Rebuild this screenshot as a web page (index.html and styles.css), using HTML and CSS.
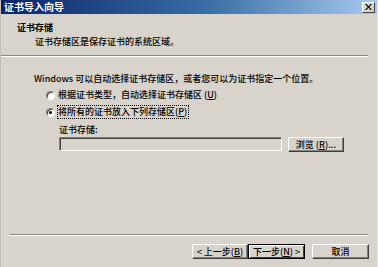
FILE: index.html
```html
<!DOCTYPE html>
<html lang="zh-CN">
<head>
<meta charset="utf-8">
<title>证书导入向导</title>
<link rel="stylesheet" href="styles.css">
</head>
<body>
<div class="window">
  <div class="titlebar">
    <span class="title-text">证书导入向导</span>
    <span class="close-btn"><svg width="7" height="6" viewBox="0 0 7 6"><path d="M0 0 L1.5 0 L3.5 2.2 L5.5 0 L7 0 L4.3 3 L7 6 L5.5 6 L3.5 3.8 L1.5 6 L0 6 L2.7 3 Z" fill="#000"/></svg></span>
  </div>
  <div class="header">
    <div class="header-title">证书存储</div>
    <div class="header-sub">证书存储区是保存证书的系统区域。</div>
  </div>
  <div class="sep sep-top"></div>
  <div class="content">
    <div class="intro">Windows 可以自动选择证书存储区，或者您可以为证书指定一个位置。</div>
    <div class="radio-row first">
      <span class="radio"></span>
      <span class="radio-label">根据证书类型，自动选择证书存储区 (<u>U</u>)</span>
    </div>
    <div class="radio-row second">
      <span class="radio checked"><span class="dot"></span></span>
      <span class="radio-label focus">将所有的证书放入下列存储区(<u>P</u>)</span>
    </div>
    <div class="store-label">证书存储:</div>
    <div class="store-row">
      <div class="input"></div>
      <div class="btn browse">浏览 (<u>R</u>)...</div>
    </div>
  </div>
  <div class="sep sep-bottom"></div>
  <div class="footer">
    <div class="btn nav">&lt; 上一步(<u>B</u>)</div>
    <div class="btn nav default">下一步(<u>N</u>) &gt;</div>
    <div class="btn cancel">取消</div>
  </div>
</div>
</body>
</html>
```
FILE: styles.css
```css
* { box-sizing: border-box; }
html, body {
  margin: 0;
  padding: 0;
  background: #d8d4cc;
}
.window {
  width: 378px;
  height: 267px;
  display: flex;
  flex-direction: column;
  background: #d8d4cc;
  font-family: "Noto Sans CJK SC", "Liberation Sans", sans-serif;
  font-size: 9px;
  font-weight: 500;
  color: #000;
  border-left: 1px solid #c4c0b8;
  border-right: 1px solid #ece9e4;
  overflow: hidden;
}
.titlebar {
  height: 14px;
  flex: none;
  display: flex;
  align-items: center;
  justify-content: space-between;
  padding: 0 2px 0 3px;
  background: linear-gradient(to right, #0a246a 0%, #3a6ea5 55%, #a6caf0 100%);
}
.title-text {
  color: #fff;
  font-weight: bold;
  font-size: 10px;
  line-height: 14px;
}
.close-btn {
  width: 13px;
  height: 11px;
  background: #d8d4cc;
  border-top: 1px solid #fff;
  border-left: 1px solid #fff;
  border-right: 1px solid #404040;
  border-bottom: 1px solid #404040;
  display: flex;
  align-items: center;
  justify-content: center;
}
.header {
  height: 41px;
  flex: none;
  padding: 8px 0 0 16px;
}
.header-title {
  font-weight: bold;
  line-height: 11px;
}
.header-sub {
  margin-top: 3px;
  padding-left: 18px;
  line-height: 11px;
}
.sep {
  flex: none;
  height: 2px;
  border-top: 1px solid #8c8984;
  border-bottom: 1px solid #fff;
}
.sep-top {
  width: 367px;
}
.sep-bottom {
  width: 358px;
  margin-left: 9px;
}
.content {
  flex: 1;
  padding: 16px 0 0 33px;
}
.intro {
  line-height: 12px;
}
.radio-row {
  display: flex;
  align-items: center;
  height: 14px;
  margin-left: 12px;
}
.radio-row.first { margin-top: 3px; }
.radio-row.second { margin-top: 3px; }
.radio {
  width: 9px;
  height: 9px;
  border-radius: 50%;
  background: #fff;
  border-top: 1px solid #808080;
  border-left: 1px solid #808080;
  border-right: 1px solid #fff;
  border-bottom: 1px solid #fff;
  box-shadow: inset 1px 1px 0 #404040;
  display: flex;
  align-items: center;
  justify-content: center;
  margin-right: 3px;
}
.dot {
  width: 3px;
  height: 3px;
  border-radius: 50%;
  background: #000;
}
.radio-label {
  line-height: 12px;
}
.radio-label.focus {
  border: 1px dotted #000;
  margin-left: -1px;
  padding-right: 1px;
}
.store-label {
  margin-left: 25px;
  margin-top: 5px;
  line-height: 12px;
}
.store-row {
  display: flex;
  align-items: flex-start;
  margin-left: 25px;
  margin-top: 1px;
}
.input {
  width: 223px;
  height: 14px;
  background: #d8d4cc;
  border-top: 1px solid #808080;
  border-left: 1px solid #808080;
  border-right: 1px solid #fff;
  border-bottom: 1px solid #fff;
  box-shadow: inset 1px 1px 0 #404040;
}
.btn {
  height: 15px;
  display: flex;
  align-items: center;
  justify-content: center;
  background: #d8d4cc;
  border-top: 1px solid #fff;
  border-left: 1px solid #fff;
  border-right: 1px solid #404040;
  border-bottom: 1px solid #404040;
  box-shadow: inset -1px -1px 0 #808080;
  line-height: 12px;
  white-space: nowrap;
}
.browse {
  width: 56px;
  margin-left: 6px;
}
.footer {
  flex: none;
  height: 31px;
  display: flex;
  align-items: flex-start;
  padding: 8px 0 0 191px;
}
.nav {
  width: 56px;
}
.nav.default {
  width: 57px;
  border: 1px solid #000;
  box-shadow: inset 1px 1px 0 #fff, inset -1px -1px 0 #404040;
}
.cancel {
  width: 57px;
  margin-left: 7px;
}
u { text-decoration: underline; }
```
